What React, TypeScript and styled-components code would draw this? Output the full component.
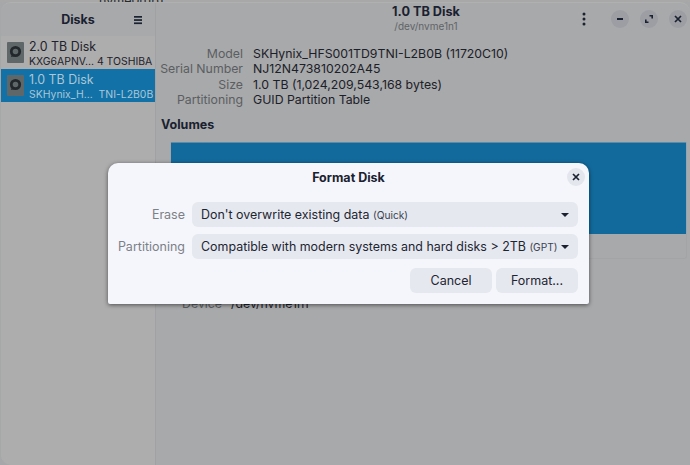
import styled, { createGlobalStyle } from "styled-components";

const GlobalStyle = createGlobalStyle`
  html, body {
    margin: 0;
    height: 100%;
    overflow: hidden;
    background: #a6a7a8;
  }
  body {
    font-family: Inter, "Liberation Sans", sans-serif;
    -webkit-font-smoothing: antialiased;
  }
`;

const Screen = styled.div`
  position: relative;
  width: 690px;
  height: 465px;
  overflow: hidden;
  background: #a6a7a8;
`;

const Peek = styled.div`
  height: 2px;
  padding-left: 99px;
  overflow: hidden;
  font-size: 12.5px;
  line-height: 2px;
  color: #26282c;
  background: #a8a8a8;
`;

const Win = styled.div`
  display: flex;
  height: 463px;
  margin-left: 1px;
  border-radius: 10px 10px 0 10px;
  overflow: hidden;
  background: #a8a9aa;
  border-top: 1px solid #b0b0b0;
  box-sizing: border-box;
`;

const Sidebar = styled.aside`
  width: 155px;
  flex-shrink: 0;
  box-sizing: border-box;
  background: #adadad;
  border-right: 1px solid #a0a1a2;
`;

const SideHeader = styled.div`
  display: flex;
  align-items: center;
  height: 33px;
  padding: 0 12px 0 0;
  box-sizing: border-box;
  background: #a8a9aa;
`;

const SideTitle = styled.h1`
  flex: 1;
  margin: 0;
  padding-left: 22px;
  text-align: center;
  font-size: 12.5px;
  font-weight: 700;
  color: #1a2130;
`;

const DiskRow = styled.div<{ $active?: boolean }>`
  display: flex;
  align-items: center;
  gap: 6px;
  height: 33px;
  padding-left: 6px;
  white-space: nowrap;
  background: ${(p) => (p.$active ? "#1271a6" : "transparent")};
  color: ${(p) => (p.$active ? "#a9c7d8" : "#1d222b")};
`;

const DiskText = styled.div`
  display: flex;
  flex-direction: column;
  margin-left: -1px;
`;

const DiskName = styled.div`
  font-size: 12.4px;
  line-height: 16px;
  padding-top: 1px;
`;

const DiskModel = styled.div`
  font-size: 10.45px;
  line-height: 13px;
`;

const Main = styled.main`
  flex: 1;
  min-width: 0;
`;

const Titlebar = styled.header`
  position: relative;
  display: flex;
  flex-direction: column;
  align-items: center;
  height: 37px;
  padding: 1px 0 0 6px;
  box-sizing: border-box;
`;

const WinTitle = styled.div`
  font-size: 12.7px;
  line-height: 16px;
  font-weight: 700;
  color: #1a2130;
`;

const WinSub = styled.div`
  font-size: 10px;
  line-height: 13px;
  color: #606468;
`;

const Controls = styled.div`
  position: absolute;
  top: 7px;
  right: 3px;
  display: flex;
  align-items: center;
  gap: 11px;
`;

const RoundBtn = styled.div<{ $light?: boolean }>`
  display: flex;
  align-items: center;
  justify-content: center;
  width: 18px;
  height: 18px;
  border-radius: 50%;
  background: ${(p) => (p.$light ? "#e4e6ed" : "#9c9ea4")};
  color: #1a2130;
`;

const MenuDots = styled(RoundBtn)`
  background: transparent;
  margin-right: 7px;
`;

const Props = styled.dl`
  display: grid;
  grid-template-columns: 87px auto;
  column-gap: 10px;
  margin: 6px 0 0 0;
  font-size: 12.3px;
  line-height: 15.4px;
`;

const PropKey = styled.dt`
  text-align: right;
  color: #5b5e62;
  white-space: nowrap;
`;

const PropValue = styled.dd`
  margin: 0;
  color: #1b2029;
  white-space: nowrap;
`;

const SectionTitle = styled.h2`
  margin: 9px 0 9px 5px;
  font-size: 12.5px;
  line-height: 16px;
  font-weight: 700;
  color: #1a2130;
`;

const VolumeBox = styled.div`
  height: 116px;
  margin: 0 3px 0 14px;
  border: 1px solid #a3a4a5;
  border-top: 0;
  border-radius: 0 0 3px 3px;
`;

const VolumeBar = styled.div`
  height: 92px;
  background: #126a9c;
  border-top: 1px solid #5f8ba5;
  box-sizing: border-box;
  box-shadow: 1px 0 0 #8fa6b4;
`;

const DeviceRow = styled.div`
  display: grid;
  grid-template-columns: 66px auto;
  column-gap: 9px;
  margin: 37px 0 0 0;
  font-size: 12.3px;
  line-height: 15px;
`;

const DeviceKey = styled.span`
  text-align: right;
  color: #5b5e62;
`;

const DeviceValue = styled.span`
  color: #1b2029;
`;

const Dialog = styled.section`
  position: absolute;
  top: 163px;
  left: 108px;
  width: 481px;
  height: 141px;
  box-sizing: border-box;
  padding: 0 11px 0 0;
  border-radius: 10px 10px 2px 2px;
  background: #f5f6fb;
  box-shadow: 0 1px 4px rgba(0, 0, 0, 0.55);
`;

const DialogHead = styled.div`
  position: relative;
  display: flex;
  align-items: center;
  justify-content: center;
  height: 29px;
  padding-left: 11px;
`;

const DialogTitle = styled.h3`
  margin: 0;
  font-size: 12.5px;
  font-weight: 700;
  color: #1a2130;
`;

const CloseSlot = styled.div`
  position: absolute;
  top: 5px;
  right: -7px;
`;

const Form = styled.div`
  display: grid;
  grid-template-columns: 77px minmax(0, 1fr);
  column-gap: 7px;
  row-gap: 7px;
  margin-top: 10px;
  align-items: center;
`;

const FieldLabel = styled.label`
  text-align: right;
  font-size: 12.5px;
  color: #7c8087;
`;

const Select = styled.div`
  display: flex;
  align-items: center;
  justify-content: space-between;
  height: 25px;
  padding: 0 9px;
  border-radius: 6px;
  background: #e6e8ef;
  font-size: 12.45px;
  color: #1d2531;
  white-space: nowrap;
`;

const Hint = styled.span`
  font-size: 10.2px;
  color: #3a4350;
`;

const Caret = styled.span`
  flex-shrink: 0;
  width: 0;
  height: 0;
  border-left: 4px solid transparent;
  border-right: 4px solid transparent;
  border-top: 4px solid #1a2130;
`;

const Actions = styled.div`
  display: flex;
  justify-content: flex-end;
  gap: 4px;
  margin-top: 9px;
`;

const Button = styled.button`
  width: 82px;
  height: 25px;
  padding: 0 0 1px;
  border: 0;
  border-radius: 6px;
  background: #e6e8ef;
  font: inherit;
  font-size: 12.5px;
  color: #1d2531;
`;

const DiskIcon = () => (
  <svg width="17" height="21" viewBox="0 0 17 21">
    <rect width="17" height="21" rx="1" fill="#5f6769" />
    <circle cx="8.5" cy="9.5" r="4.2" fill="none" stroke="#23282d" strokeWidth="2.8" />
    <path d="M5 12l-1 3 4-1z" fill="#23282d" />
  </svg>
);

const Hamburger = () => (
  <svg width="10" height="10" viewBox="0 0 10 10" fill="#1a2130">
    <rect x="1" y="1" width="8" height="1.7" />
    <rect x="1" y="4.2" width="8" height="1.7" />
    <rect x="1" y="7.4" width="8" height="1.7" />
  </svg>
);

const Dots = () => (
  <svg width="4" height="14" viewBox="0 0 4 14" fill="#1a2130">
    <circle cx="2" cy="2" r="1.5" />
    <circle cx="2" cy="7" r="1.5" />
    <circle cx="2" cy="12" r="1.5" />
  </svg>
);

const Minimize = () => (
  <svg width="10" height="10" viewBox="0 0 10 10">
    <rect x="2" y="4" width="6" height="2" fill="#1a2130" />
  </svg>
);

const Maximize = () => (
  <svg width="10" height="10" viewBox="0 0 10 10" fill="none" stroke="#1a2130" strokeWidth="1.6">
    <path d="M5.5 1.8h2.7v2.7M1.8 5.5v2.7h2.7" />
  </svg>
);

const Close = () => (
  <svg width="10" height="10" viewBox="0 0 10 10" fill="none" stroke="#1a2130" strokeWidth="1.7">
    <path d="M2 2l6 6M8 2l-6 6" />
  </svg>
);

export default function App() {
  return (
    <Screen>
      <GlobalStyle />
      <Peek>nvme0n1p1</Peek>
      <Win>
        <Sidebar>
          <SideHeader>
            <SideTitle>Disks</SideTitle>
            <Hamburger />
          </SideHeader>
          <DiskRow>
            <DiskIcon />
            <DiskText>
              <DiskName>2.0 TB Disk</DiskName>
              <DiskModel>KXG6APNV... 4 TOSHIBA</DiskModel>
            </DiskText>
          </DiskRow>
          <DiskRow $active>
            <DiskIcon />
            <DiskText>
              <DiskName>1.0 TB Disk</DiskName>
              <DiskModel>SKHynix_H...&nbsp; TNI-L2B0B</DiskModel>
            </DiskText>
          </DiskRow>
        </Sidebar>
        <Main>
          <Titlebar>
            <WinTitle>1.0 TB Disk</WinTitle>
            <WinSub>/dev/nvme1n1</WinSub>
            <Controls>
              <MenuDots><Dots /></MenuDots>
              <RoundBtn><Minimize /></RoundBtn>
              <RoundBtn><Maximize /></RoundBtn>
              <RoundBtn><Close /></RoundBtn>
            </Controls>
          </Titlebar>
          <Props>
            <PropKey>Model</PropKey>
            <PropValue>SKHynix_HFS001TD9TNI-L2B0B (11720C10)</PropValue>
            <PropKey>Serial Number</PropKey>
            <PropValue>NJ12N473810202A45</PropValue>
            <PropKey>Size</PropKey>
            <PropValue>1.0 TB (1,024,209,543,168 bytes)</PropValue>
            <PropKey>Partitioning</PropKey>
            <PropValue>GUID Partition Table</PropValue>
          </Props>
          <SectionTitle>Volumes</SectionTitle>
          <VolumeBox>
            <VolumeBar />
          </VolumeBox>
          <DeviceRow>
            <DeviceKey>Device</DeviceKey>
            <DeviceValue>/dev/nvme1n1</DeviceValue>
          </DeviceRow>
        </Main>
      </Win>
      <Dialog>
        <DialogHead>
          <DialogTitle>Format Disk</DialogTitle>
          <CloseSlot>
            <RoundBtn $light><Close /></RoundBtn>
          </CloseSlot>
        </DialogHead>
        <Form>
          <FieldLabel>Erase</FieldLabel>
          <Select>
            <span>Don't overwrite existing data <Hint>(Quick)</Hint></span>
            <Caret />
          </Select>
          <FieldLabel>Partitioning</FieldLabel>
          <Select>
            <span>Compatible with modern systems and hard disks &gt; 2TB <Hint>(GPT)</Hint></span>
            <Caret />
          </Select>
        </Form>
        <Actions>
          <Button>Cancel</Button>
          <Button>Format...</Button>
        </Actions>
      </Dialog>
    </Screen>
  );
}
